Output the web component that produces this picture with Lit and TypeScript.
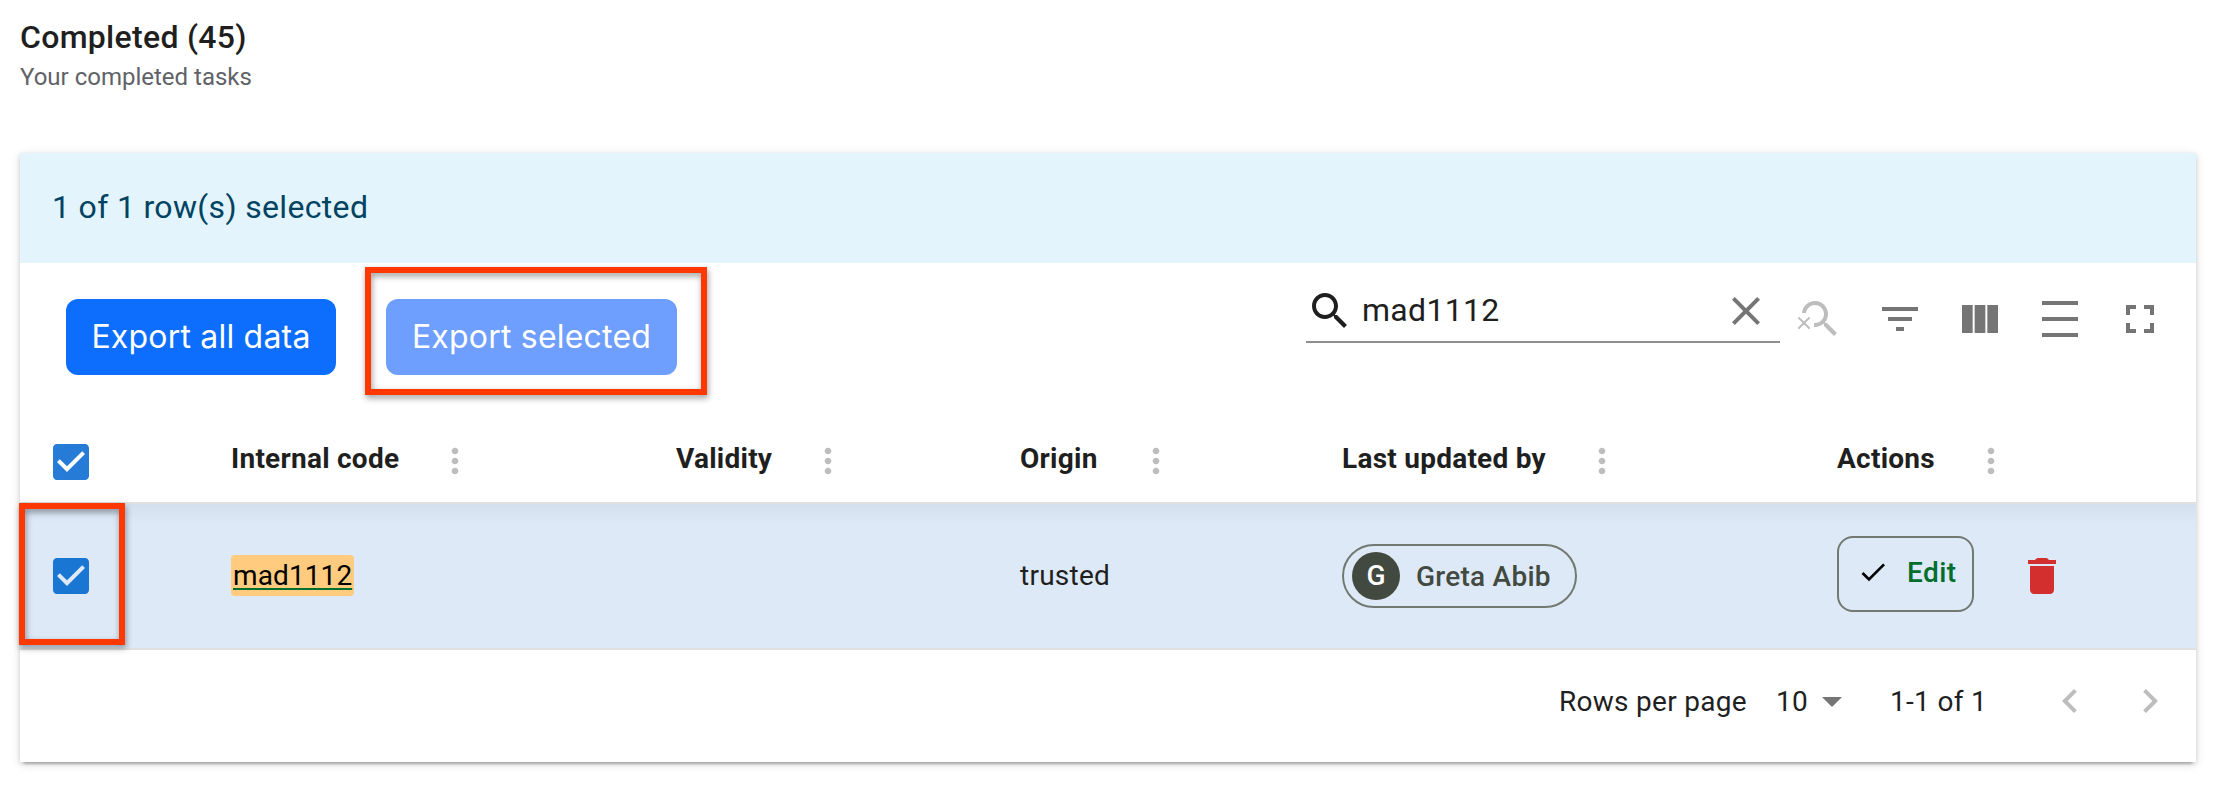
import { LitElement, html, css, svg } from "lit";
import { customElement } from "lit/decorators.js";

const ICONS: Record<string, string> = {
  search: "M15.5 14h-.79l-.28-.27C15.41 12.59 16 11.11 16 9.5 16 5.91 13.09 3 9.5 3S3 5.91 3 9.5 5.91 16 9.5 16c1.61 0 3.09-.59 4.23-1.57l.27.28v.79l5 4.99L20.49 19l-4.99-5zm-6 0C7.01 14 5 11.99 5 9.5S7.01 5 9.5 5 14 7.01 14 9.5 11.99 14 9.5 14z",
  close: "M19 6.41L17.59 5 12 10.59 6.41 5 5 6.41 10.59 12 5 17.59 6.41 19 12 13.41 17.59 19 19 17.59 13.41 12z",
  searchOff: "M15.5 14h-.79l-.28-.27C15.41 12.59 16 11.11 16 9.5 16 5.91 13.09 3 9.5 3 6.08 3 3.28 5.64 3.03 9h2.02C5.3 6.75 7.18 5 9.5 5 11.99 5 14 7.01 14 9.5S11.99 14 9.5 14c-.17 0-.33-.03-.5-.05v2.02c.17.02.33.03.5.03 1.61 0 3.09-.59 4.23-1.57l.27.28v.79l5 4.99L20.49 19l-4.99-5z M6.47 10.82 4 13.29l-2.47-2.47-.71.71L3.29 14 .82 16.47l.71.71L4 14.71l2.47 2.47.71-.71L4.71 14l2.47-2.47z",
  filter: "M10 18h4v-2h-4v2zM3 6v2h18V6H3zm3 7h12v-2H6v2z",
  columns: "M14.67 5v14H9.33V5h5.34zm1 14H21V5h-5.33v14zm-7.34 0V5H3v14h5.33z",
  density: "M3 3h18v2H3zm0 16h18v2H3zm0-8h18v2H3z",
  fullscreen: "M7 14H5v5h5v-2H7v-3zm-2-4h2V7h3V5H5v5zm12 7h-3v2h5v-5h-2v3zM14 5v2h3v3h2V5h-5z",
  checkbox: "M19 3H5c-1.11 0-2 .9-2 2v14c0 1.1.89 2 2 2h14c1.11 0 2-.9 2-2V5c0-1.1-.89-2-2-2zm-9 14l-5-5 1.41-1.41L10 14.17l7.59-7.59L19 8l-9 9z",
  more: "M12 8c1.1 0 2-.9 2-2s-.9-2-2-2-2 .9-2 2 .9 2 2 2zm0 2c-1.1 0-2 .9-2 2s.9 2 2 2 2-.9 2-2-.9-2-2-2zm0 6c-1.1 0-2 .9-2 2s.9 2 2 2 2-.9 2-2-.9-2-2-2z",
  check: "M9 16.17 4.83 12l-1.42 1.41L9 19 21 7l-1.41-1.41z",
  trash: "M6 19c0 1.1.9 2 2 2h8c1.1 0 2-.9 2-2V7H6v12zM19 4h-3.5l-.7-.7q-.3-.3-.8-.3h-4q-.5 0-.8.3L8.5 4H5v2h14V4z",
  dropdown: "M7 10l5 5 5-5z",
  left: "M15.41 7.41L14 6l-6 6 6 6 1.41-1.41L10.83 12z",
  right: "M10 6L8.59 7.41 13.17 12l-4.58 4.59L10 18l6-6z",
};

const icon = (name: string, cls = "") =>
  html`<svg class="icon ${cls}" viewBox="0 0 24 24" aria-hidden="true">${svg`<path d=${ICONS[name]} />`}</svg>`;

const COLUMNS = [
  { label: "Internal code", cls: "code" },
  { label: "Validity", cls: "validity" },
  { label: "Origin", cls: "origin" },
  { label: "Last updated by", cls: "updated" },
  { label: "Actions", cls: "actions" },
];

@customElement("app-root")
export class AppRoot extends LitElement {
  static styles = css`
    :host {
      display: block;
      box-sizing: border-box;
      height: 790px;
      padding: 0 36px 0 20px;
      overflow: hidden;
      background: #fff;
      color: #1f1f1f;
      font-family: Roboto, "Liberation Sans", sans-serif;
      font-size: 28px;
      letter-spacing: 0.25px;
    }
    * { box-sizing: border-box; }
    .icon { display: block; flex: none; width: 48px; height: 48px; fill: currentColor; }
    .heading { height: 153px; padding-top: 18px; }
    h1 { margin: 0; font-size: 32px; font-weight: 500; line-height: 38px; color: #1f1f1f; letter-spacing: 0.3px; }
    .sub { margin: 0; padding-top: 7px; font-size: 24px; line-height: 28px; color: #5f6368; letter-spacing: 0; }
    .card {
      height: 609px;
      background: #fff;
      box-shadow: 0 6px 2px -4px rgba(0,0,0,.2), 0 2px 4px rgba(0,0,0,.14), 0 2px 10px rgba(0,0,0,.12);
    }
    .banner {
      display: flex; align-items: center;
      height: 110px; padding: 0 0 2px 32px;
      background: #e3f4fd; color: #014361;
      font-size: 32px; letter-spacing: 0.33px;
    }
    .toolbar { display: flex; justify-content: space-between; height: 157px; padding: 4px 16px 0 46px; }
    .exports { display: flex; padding-top: 32px; }
    .btn {
      width: 270px; height: 76px; padding: 0; border: 0; border-radius: 12px;
      background: #0d6efd; color: #fff;
      font: 400 32px/76px Inter, sans-serif; letter-spacing: 0.2px;
    }
    .marked { position: relative; margin-left: 50px; }
    .btn.disabled { width: 291px; background: #6e9efe; }
    .mark {
      position: absolute; border: 6px solid #ff3700; pointer-events: none;
      filter: drop-shadow(1px 3px 3px rgba(0,0,0,.4));
    }
    .mark.export { left: -21px; top: -32px; width: 342px; height: 128px; }
    .mark.select { left: -1px; top: -1px; width: 106px; height: 142px; }
    .tools { display: flex; color: #757575; }
    .search {
      display: flex; align-items: center;
      width: 474px; height: 76px; padding: 14px 10px 0 0;
      border-bottom: 2px solid #8e8e8e;
      color: #1f1f1f; font-size: 32px; letter-spacing: 0.3px;
    }
    .search .query { flex: 1; padding: 0 0 2px 8px; }
    .search .clear { color: #757575; }
    .iconbar { display: flex; padding-top: 12px; }
    .iconbar .icon { margin: 16px; }
    .off { color: #bdbdbd; }
    .row {
      display: grid;
      grid-template-columns: 211px 445px 344px 322px 495px 1fr;
      align-items: center;
    }
    .row > .select { padding-left: 27px; }
    .head { height: 84px; border-bottom: 2px solid #e0e0e0; font-weight: 700; }
    .head > .select { padding-top: 2px; color: #267bd6; }
    .th { display: flex; align-items: center; }
    .th .label { padding-bottom: 5px; }
    .th .icon { width: 40px; height: 40px; color: #bdbdbd; }
    .code .label { width: 204px; }
    .validity .label { width: 132px; }
    .origin .label { width: 116px; }
    .updated .label { width: 240px; }
    .actions .label { width: 134px; }
    .body {
      position: relative; height: 146px;
      border-bottom: 2px solid #e0e0e0;
      background: linear-gradient(#d3dfec, #dce8f6 17px, #dde9f7 20px);
    }
    .body > .select { color: #1976d2; }
    .code mark {
      display: inline-block; padding: 4px 2px 0; height: 41px; border-radius: 4px;
      background: #ffcb7f; color: #000; line-height: 33px; letter-spacing: 0.1px;
      text-decoration: underline #006e2c 2px; text-underline-offset: 3px;
    }
    .code { padding-bottom: 1px; }
    .origin-cell { padding-bottom: 2px; }
    .chip {
      display: flex; align-items: center; width: 235px; height: 64px; padding-left: 8px;
      border: 2px solid #727970; border-radius: 32px; color: #424940; font-weight: 500;
    }
    .avatar {
      width: 48px; height: 48px; margin-right: 16px; border-radius: 50%;
      background: #424940; color: #fff; text-align: center; line-height: 48px; letter-spacing: 0;
    }
    .act { display: flex; align-items: center; }
    .edit {
      display: flex; align-items: center; width: 137px; height: 76px; padding: 0 0 4px 18px;
      border: 2px solid #727970; border-radius: 16px; margin-top: -4px;
      color: #006e2c; font-weight: 500;
    }
    .edit .icon { width: 32px; height: 32px; margin-right: 18px; color: #000; }
    .edit span { padding-top: 1px; letter-spacing: 0.4px; }
    .trash { margin-left: 44px; color: #d32f2f; }
    .foot {
      display: flex; align-items: center; justify-content: flex-end;
      height: 112px; padding: 0 22px 10px 0; letter-spacing: 0.3px;
    }
    .size { margin-left: 29px; }
    .dropdown { color: #757575; margin-right: 34px; }
    .left { margin-left: 59px; }
    .right { margin-left: 32px; }
  `;

  render() {
    return html`
      <header class="heading">
        <h1><span>Completed (45)</span></h1>
        <p class="sub"><span>Your completed tasks</span></p>
      </header>
      <section class="card">
        <div class="banner"><span>1 of 1 row(s) selected</span></div>
        <div class="toolbar">
          <div class="exports">
            <button class="btn">Export all data</button>
            <div class="marked">
              <button class="btn disabled">Export selected</button>
              <div class="mark export"></div>
            </div>
          </div>
          <div class="tools">
            <div class="search">
              ${icon("search")}<span class="query">mad1112</span>${icon("close", "clear")}
            </div>
            <div class="iconbar">
              ${icon("searchOff", "off")}${icon("filter")}${icon("columns")}${icon("density")}${icon("fullscreen")}
            </div>
          </div>
        </div>
        <div class="row head">
          <div class="select">${icon("checkbox")}</div>
          ${COLUMNS.map((c) => html`<div class="th ${c.cls}"><span class="label">${c.label}</span>${icon("more")}</div>`)}
        </div>
        <div class="row body">
          <div class="select">${icon("checkbox")}</div>
          <div class="code"><mark>mad1112</mark></div>
          <div></div>
          <div class="origin-cell">trusted</div>
          <div><div class="chip"><span class="avatar">G</span><span>Greta Abib</span></div></div>
          <div class="act">
            <div class="edit">${icon("check")}<span>Edit</span></div>
            ${icon("trash", "trash")}
          </div>
          <div class="mark select"></div>
        </div>
        <footer class="foot">
          <span>Rows per page</span>
          <span class="size">10</span>
          ${icon("dropdown", "dropdown")}
          <span class="range">1-1 of 1</span>
          ${icon("left", "off left")}${icon("right", "off right")}
        </footer>
      </section>
    `;
  }
}
